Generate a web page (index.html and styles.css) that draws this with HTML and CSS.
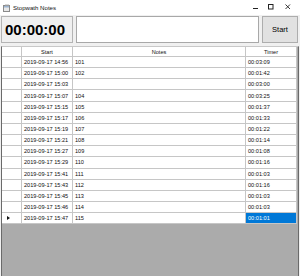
FILE: index.html
```html
<!DOCTYPE html>
<html lang="en">
<head>
    <meta charset="UTF-8">
    <title>Stopwath Notes</title>
    <link rel="stylesheet" href="styles.css">
</head>
<body>
    <div class="window">
        <div class="titlebar">
            <svg class="app-icon" width="7" height="8" viewBox="0 0 7 8">
                <rect x="0.5" y="1.5" width="6" height="6" fill="#e8e8e8" stroke="#8a8a8a"/>
                <rect x="1" y="2" width="5" height="1.5" fill="#9bb3cf"/>
                <rect x="2" y="0.5" width="4" height="1" fill="#b0b0b0"/>
            </svg>
            <span class="title">Stopwath Notes</span>
            <div class="caption-buttons">
                <svg width="15" height="14" viewBox="0 0 15 14"><line x1="5" y1="7.5" x2="10" y2="7.5" stroke="#222" stroke-width="1"/></svg>
                <svg width="15" height="14" viewBox="0 0 15 14"><rect x="5.5" y="3.5" width="4.5" height="4.5" fill="none" stroke="#222" stroke-width="1"/></svg>
                <svg width="20" height="14" viewBox="0 0 20 14"><path d="M7.5 3.5 L12 8 M12 3.5 L7.5 8" stroke="#222" stroke-width="0.9"/></svg>
            </div>
        </div>

        <div class="toolbar">
            <div class="clock">00:00:00</div>
            <input class="notes" type="text">
            <button class="start">Start</button>
        </div>

        <div class="grid">
            <div class="row head">
                <div class="cell rowhead"></div>
                <div class="cell">Start</div>
                <div class="cell">Notes</div>
                <div class="cell">Timer</div>
            </div>
            <div class="row"><div class="cell rowhead"></div><div class="cell">2019-09-17 14:56</div><div class="cell">101</div><div class="cell">00:03:09</div></div>
            <div class="row"><div class="cell rowhead"></div><div class="cell">2019-09-17 15:00</div><div class="cell">102</div><div class="cell">00:01:42</div></div>
            <div class="row"><div class="cell rowhead"></div><div class="cell">2019-09-17 15:03</div><div class="cell"></div><div class="cell">00:03:00</div></div>
            <div class="row"><div class="cell rowhead"></div><div class="cell">2019-09-17 15:07</div><div class="cell">104</div><div class="cell">00:03:25</div></div>
            <div class="row"><div class="cell rowhead"></div><div class="cell">2019-09-17 15:15</div><div class="cell">105</div><div class="cell">00:01:37</div></div>
            <div class="row"><div class="cell rowhead"></div><div class="cell">2019-09-17 15:17</div><div class="cell">106</div><div class="cell">00:01:33</div></div>
            <div class="row"><div class="cell rowhead"></div><div class="cell">2019-09-17 15:19</div><div class="cell">107</div><div class="cell">00:01:22</div></div>
            <div class="row"><div class="cell rowhead"></div><div class="cell">2019-09-17 15:21</div><div class="cell">108</div><div class="cell">00:01:14</div></div>
            <div class="row"><div class="cell rowhead"></div><div class="cell">2019-09-17 15:27</div><div class="cell">109</div><div class="cell">00:01:08</div></div>
            <div class="row"><div class="cell rowhead"></div><div class="cell">2019-09-17 15:29</div><div class="cell">110</div><div class="cell">00:01:16</div></div>
            <div class="row"><div class="cell rowhead"></div><div class="cell">2019-09-17 15:41</div><div class="cell">111</div><div class="cell">00:01:03</div></div>
            <div class="row"><div class="cell rowhead"></div><div class="cell">2019-09-17 15:43</div><div class="cell">112</div><div class="cell">00:01:16</div></div>
            <div class="row"><div class="cell rowhead"></div><div class="cell">2019-09-17 15:45</div><div class="cell">113</div><div class="cell">00:01:03</div></div>
            <div class="row"><div class="cell rowhead"></div><div class="cell">2019-09-17 15:46</div><div class="cell">114</div><div class="cell">00:01:03</div></div>
            <div class="row"><div class="cell rowhead"><span class="arrow"></span></div><div class="cell">2019-09-17 15:47</div><div class="cell">115</div><div class="cell selected">00:01:01</div></div>
        </div>
    </div>
</body>
</html>
```

FILE: styles.css
```css
body {
    margin: 0;
    padding: 0;
    font-family: "Liberation Sans", Arial, sans-serif;
    background-color: #f0f0f0;
    color: #000;
    overflow: hidden;
}

.window {
    width: 300px;
    height: 276px;
    display: flex;
    flex-direction: column;
    background-color: #f0f0f0;
}

.titlebar {
    height: 15px;
    background-color: #fff;
    display: flex;
    align-items: center;
    flex-shrink: 0;
}

.app-icon {
    margin-left: 3px;
    margin-right: 3px;
}

.title {
    font-size: 6.1px;
    color: #111;
}

.caption-buttons {
    margin-left: auto;
    display: flex;
    margin-right: 2px;
}

.caption-buttons svg {
    display: block;
}

.toolbar {
    display: flex;
    padding: 1px 2px 0 1px;
    gap: 3px;
    height: 28px;
    box-sizing: border-box;
    flex-shrink: 0;
}

.clock {
    width: 72px;
    height: 27px;
    box-sizing: border-box;
    border: 1px solid #b4b4b4;
    font-weight: bold;
    font-size: 15px;
    line-height: 25px;
    padding-left: 3px;
    color: #000;
}

.notes {
    width: 183px;
    height: 27px;
    box-sizing: border-box;
    margin: 0;
    border: 1px solid #a8a8a8;
    background: #fff;
    outline: none;
}

.start {
    width: 36px;
    height: 27px;
    margin: 0;
    padding: 0;
    box-sizing: border-box;
    border: 1px solid #adadad;
    background: #e1e1e1;
    font-family: "Liberation Sans", Arial, sans-serif;
    font-size: 7.5px;
    color: #000;
}

.grid {
    margin: 3px 1px 0 1px;
    flex: 1;
    background-color: #ababab;
    border-left: 1px solid #6a6a6a;
    border-right: 1px solid #6a6a6a;
    border-top: 1px solid #c8c8c8;
    overflow: hidden;
}

.row {
    display: grid;
    grid-template-columns: 20px 51px 173px 51px;
    height: 11.17px;
    box-sizing: border-box;
    font-size: 5.6px;
}

.row.head {
    height: 10px;
}

.cell {
    background-color: #fff;
    border-right: 1px solid #c6c6c6;
    border-bottom: 1px solid #c6c6c6;
    padding-left: 2px;
    display: flex;
    align-items: center;
    white-space: nowrap;
    overflow: hidden;
    color: #111;
}

.head .cell {
    justify-content: center;
    padding-left: 0;
}

.rowhead {
    padding-left: 0;
}

.selected {
    background-color: #0078d7;
    color: #fff;
}

.arrow {
    width: 0;
    height: 0;
    margin-left: 5px;
    border-left: 3px solid #111;
    border-top: 2.5px solid transparent;
    border-bottom: 2.5px solid transparent;
}
```
